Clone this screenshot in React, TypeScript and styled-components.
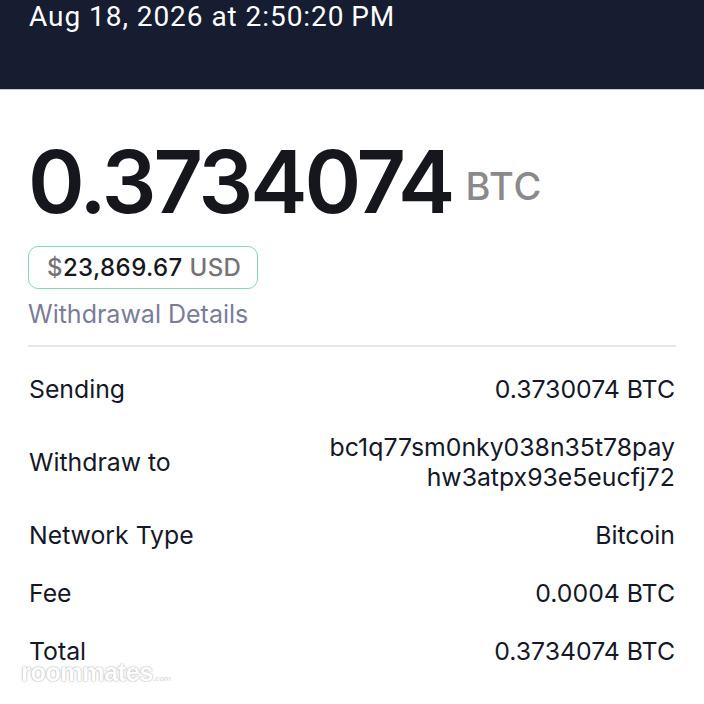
import React from "react";
import styled, { createGlobalStyle } from "styled-components";

const GlobalStyle = createGlobalStyle`
  html, body {
    margin: 0;
    padding: 0;
    background: #ffffff;
  }
  body {
    font-family: Inter, "Noto Sans", sans-serif;
    color: #151826;
  }
`;

const rows = [
  { label: "Sending", value: ["0.3730074 BTC"] },
  { label: "Withdraw to", value: ["bc1q77sm0nky038n35t78pay", "hw3atpx93e5eucfj72"] },
  { label: "Network Type", value: ["Bitcoin"] },
  { label: "Fee", value: ["0.0004 BTC"] },
  { label: "Total", value: ["0.3734074 BTC"] },
];

export default function App() {
  return (
    <>
      <GlobalStyle />
      <Page>
        <Header>
          <DateText>Aug 18, 2026 at 2:50:20{"\u2009"}PM</DateText>
        </Header>
        <Body>
          <AmountRow>
            <Amount>0.3734074</Amount>
            <Unit>BTC</Unit>
          </AmountRow>
          <FiatPill>
            <Muted>$</Muted>23,869.67 <Muted>USD</Muted>
          </FiatPill>
          <SectionTitle>Withdrawal Details</SectionTitle>
          <Divider />
          <DetailList>
            {rows.map((row) => (
              <DetailRow key={row.label}>
                <Label>{row.label}</Label>
                <Value>
                  {row.value.map((line) => (
                    <div key={line}>{line}</div>
                  ))}
                </Value>
              </DetailRow>
            ))}
          </DetailList>
        </Body>
        <Watermark>
          roommates<small>.com</small>
        </Watermark>
      </Page>
    </>
  );
}

const Page = styled.div`
  position: relative;
  width: 704px;
  height: 704px;
  overflow: hidden;
`;

const Header = styled.div`
  height: 90px;
  background: #161d31;
  border-bottom: 1px solid #c3c8de;
  padding: 0 29px;
  box-sizing: border-box;
`;

const DateText = styled.div`
  font-family: Roboto, "Noto Sans", sans-serif;
  font-size: 28px;
  line-height: 30px;
  color: #ffffff;
  padding-top: 2px;
  letter-spacing: 0.95px;
`;

const Body = styled.div`
  padding: 0 28px;
`;

const AmountRow = styled.div`
  display: flex;
  align-items: flex-end;
  gap: 13px;
  margin-top: 42px;
  height: 100px;
`;

const Amount = styled.div`
  font-size: 86px;
  font-weight: 600;
  letter-spacing: -3px;
  line-height: 100px;
  color: #16171c;
`;

const Unit = styled.div`
  font-size: 38px;
  font-weight: 500;
  letter-spacing: 0.8px;
  line-height: 40px;
  margin-bottom: 26px;
  color: #8a8a8c;
`;

const FiatPill = styled.div`
  display: inline-flex;
  align-items: center;
  margin-top: 14px;
  height: 43px;
  box-sizing: border-box;
  padding: 0 16px 0 18px;
  border: 1.5px solid #80d8c4;
  border-radius: 10px;
  font-size: 24px;
  font-weight: 500;
  letter-spacing: 0.4px;
  color: #16171c;
  white-space: pre;
`;

const Muted = styled.span`
  color: #737378;
`;

const SectionTitle = styled.div`
  margin-top: 10px;
  font-size: 25px;
  color: #7b7d98;
  line-height: 30px;
`;

const Divider = styled.div`
  margin-top: 16px;
  height: 2px;
  background: #e6e6ea;
`;

const DetailList = styled.div`
  display: flex;
  flex-direction: column;
  padding-top: 13px;
`;

const DetailRow = styled.div`
  display: flex;
  justify-content: space-between;
  align-items: center;
  padding: 14px 1px;
  font-size: 24.8px;
  line-height: 30px;
  color: #141827;
`;

const Label = styled.div``;

const Value = styled.div`
  text-align: right;
`;

const Watermark = styled.div`
  position: absolute;
  left: 21px;
  top: 658px;
  font-family: "Liberation Sans", Arial, sans-serif;
  font-size: 25px;
  font-weight: 700;
  letter-spacing: -0.3px;
  color: #ffffff;
  text-shadow: 0 0 2px rgba(120, 120, 120, 0.55), 0 0 1px rgba(120, 120, 120, 0.5);

  small {
    font-size: 8px;
    text-shadow: none;
    color: rgba(210, 210, 210, 0.7);
  }
`;
